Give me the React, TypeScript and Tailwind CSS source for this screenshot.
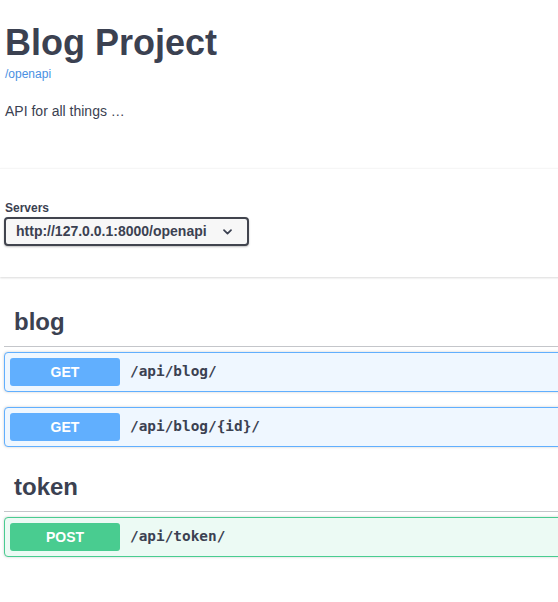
import React from "react";

type Op = { method: string; path: string };

const methodStyles: Record<string, { block: string; badge: string }> = {
    GET: { block: "border-[#61affe] bg-[#eff7ff]", badge: "bg-[#61affe]" },
    POST: { block: "border-[#49cc90] bg-[#ecfaf4]", badge: "bg-[#49cc90]" },
};

const OpBlock: React.FC<{ op: Op }> = ({ op }) => {
    const s = methodStyles[op.method];
    return (
        <div className={`flex items-center rounded-[4px] border p-[5px] shadow-[0_0_3px_rgba(0,0,0,0.19)] ${s.block}`}>
            <span className={`flex h-[28px] w-[110px] items-center justify-center rounded-[3px] text-[14px] font-bold text-white ${s.badge}`}>
                {op.method}
            </span>
            <span className="ml-[10px] font-['DejaVu_Sans_Mono',monospace] text-[14.4px] font-bold text-[#3b4151]">{op.path}</span>
        </div>
    );
};

const TagSection: React.FC<{ name: string; ops: Op[]; className?: string }> = ({ name, ops, className }) => {
    return (
        <div className={className}>
            <div className="border-b border-[rgba(59,65,81,0.3)] pt-[10px] pb-[12px] pl-[10px]">
                <h3 className="text-[24px] leading-[24px] font-bold text-[#3b4151]">{name}</h3>
            </div>
            <div className="mt-[5px] flex flex-col gap-[15px]">
                {ops.map((op) => (
                    <OpBlock key={op.path} op={op} />
                ))}
            </div>
        </div>
    );
};

export default function App() {
    return (
        <div className="h-[602px] w-[558px] overflow-hidden bg-white font-['Liberation_Sans',Arial,sans-serif] text-[#3b4151]">
            <div className="w-[620px]">
                {/* Info */}
                <div className="px-[5px] pt-[25px]">
                    <h2 className="text-[36px] leading-[36px] font-bold text-[#3b4151]">Blog Project</h2>
                    <a className="mt-[7px] block text-[12px] leading-[12px] text-[#4990e2]">/openapi</a>
                    <p className="mt-[21px] text-[14px] leading-[20px] text-[#3b4151]">API for all things …</p>
                </div>

                {/* Servers */}
                <div className="mt-[47px] border-t border-[#f6f6f6] bg-white px-[4px] pt-[33px] pb-[31px] shadow-[0_1px_2px_0_rgba(0,0,0,0.15)]">
                    <label className="block pl-[1px] text-[12px] leading-[12px] font-bold text-[#3b4151]">Servers</label>
                    <div className="mt-[3px] flex h-[29px] w-[245px] items-center justify-between rounded-[4px] border-2 border-[#41444e] bg-[#f7f7f7] pr-[15px] pl-[10px] shadow-[0_1px_2px_0_rgba(0,0,0,0.25)]">
                        <span className="text-[14px] leading-[25px] font-bold text-[#3b4151]">http://127.0.0.1:8000/openapi</span>
                        <svg width="9" height="6" viewBox="0 0 9 6" fill="none">
                            <path d="M1 1.2l3.5 3.5 3.5-3.5" stroke="#3b4151" strokeWidth="1.7" strokeLinecap="round" strokeLinejoin="round" />
                        </svg>
                    </div>
                </div>

                {/* Tags */}
                <div className="px-[4px]">
                    <TagSection
                        className="mt-[23px]"
                        name="blog"
                        ops={[
                            { method: "GET", path: "/api/blog/" },
                            { method: "GET", path: "/api/blog/{id}/" },
                        ]}
                    />
                    <TagSection className="mt-[18px]" name="token" ops={[{ method: "POST", path: "/api/token/" }]} />
                </div>
            </div>
        </div>
    );
}
